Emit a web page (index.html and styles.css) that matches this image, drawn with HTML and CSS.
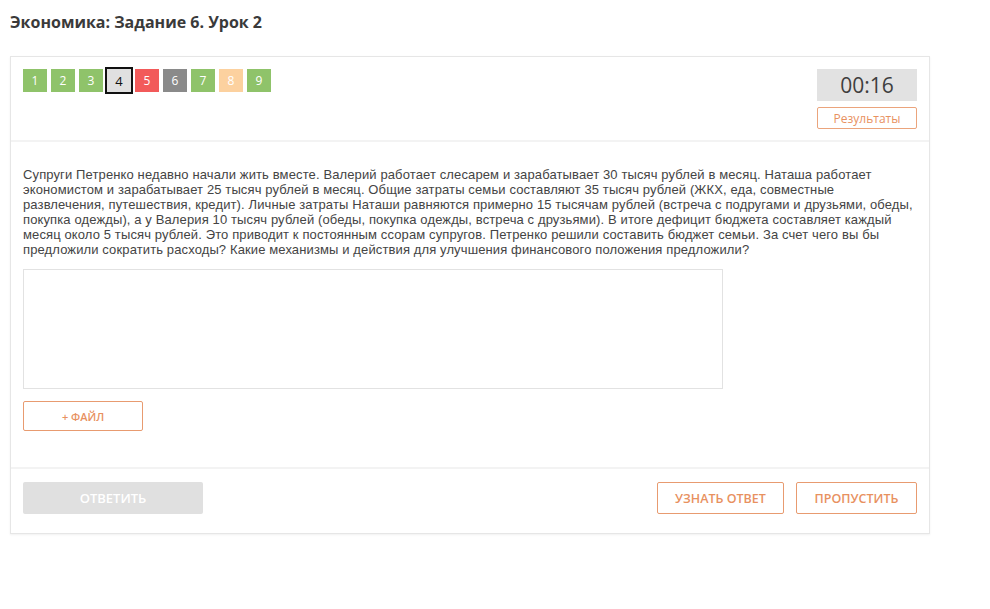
FILE: index.html
```html
<!DOCTYPE html>
<html lang="ru">
<head>
    <meta charset="UTF-8">
    <meta name="viewport" content="width=device-width, initial-scale=1.0">
    <title>Экономика: Задание 6. Урок 2</title>
    <link rel="stylesheet" href="styles.css">
</head>
<body>

<h1 class="page-title">Экономика: Задание 6. Урок 2</h1>

<div class="task-card">
    <div class="task-head">
        <div class="steps">
            <span class="step done">1</span>
            <span class="step done">2</span>
            <span class="step done">3</span>
            <span class="step current">4</span>
            <span class="step wrong">5</span>
            <span class="step skipped">6</span>
            <span class="step done">7</span>
            <span class="step partial">8</span>
            <span class="step done">9</span>
        </div>
        <div class="timer-box">
            <div class="timer">00:16</div>
            <button class="results-btn">Результаты</button>
        </div>
    </div>

    <div class="task-body">
        <p class="question">Супруги Петренко недавно начали жить вместе. Валерий работает слесарем и зарабатывает 30 тысяч рублей в месяц. Наташа работает экономистом и зарабатывает 25 тысяч рублей в месяц. Общие затраты семьи составляют 35 тысяч рублей (ЖКХ, еда, совместные развлечения, путешествия, кредит). Личные затраты Наташи равняются примерно 15 тысячам рублей (встреча с подругами и друзьями, обеды, покупка одежды), а у Валерия 10 тысяч рублей (обеды, покупка одежды, встреча с друзьями). В итоге дефицит бюджета составляет каждый месяц около 5 тысяч рублей. Это приводит к постоянным ссорам супругов. Петренко решили составить бюджет семьи. За счет чего вы бы предложили сократить расходы? Какие механизмы и действия для улучшения финансового положения предложили?</p>
        <textarea class="answer"></textarea>
        <button class="file-btn">+ ФАЙЛ</button>
    </div>

    <div class="task-foot">
        <button class="answer-btn" disabled>ОТВЕТИТЬ</button>
        <div class="foot-right">
            <button class="outline-btn reveal">УЗНАТЬ ОТВЕТ</button>
            <button class="outline-btn skip">ПРОПУСТИТЬ</button>
        </div>
    </div>
</div>

</body>
</html>
```

FILE: styles.css
```css
body {
    font-family: "Open Sans", Arial, sans-serif;
    background: #fff;
    margin: 0;
    padding: 10px;
    color: #333;
}
.page-title {
    margin: 1px 0 23px;
    font-size: 16px;
    font-weight: bold;
    color: #3a3a3a;
    line-height: 22px;
}
.task-card {
    width: 918px;
    border: 1px solid #e6e6e6;
    box-shadow: 0 1px 2px rgba(0, 0, 0, 0.06);
    background: #fff;
}
.task-head {
    display: flex;
    justify-content: space-between;
    align-items: flex-start;
    padding: 12px 12px 11px 12px;
    border-bottom: 2px solid #f3f3f3;
}
.steps {
    display: flex;
    gap: 4px;
}
.step {
    width: 24px;
    height: 23px;
    display: flex;
    align-items: center;
    justify-content: center;
    font-size: 12px;
    color: #fff;
}
.step.done {
    background: #8fc36a;
}
.step.wrong {
    background: #f25a5a;
}
.step.skipped {
    background: #8a8a8a;
}
.step.partial {
    background: #fcd19f;
}
.step.current {
    background: #e0e0e0;
    outline: 2px solid #111;
    color: #111;
    font-size: 13px;
}
.timer-box {
    display: flex;
    flex-direction: column;
    gap: 6px;
    width: 100px;
}
.timer {
    height: 32px;
    line-height: 32px;
    text-align: center;
    background: #e2e2e2;
    font-size: 21px;
    font-weight: 500;
    color: #3e3e3e;
}
.results-btn {
    height: 22px;
    padding: 0;
    background: #fff;
    border: 1px solid #eba47c;
    border-radius: 2px;
    color: #e8915f;
    font-family: "Open Sans", Arial, sans-serif;
    font-size: 12px;
}
.task-body {
    padding: 25px 12px 36px;
    border-bottom: 2px solid #f3f3f3;
}
.question {
    margin: 0 0 12px;
    font-family: Arial, "Liberation Sans", sans-serif;
    font-size: 13px;
    line-height: 15px;
    letter-spacing: 0.12px;
    color: #444;
}
.answer {
    display: block;
    width: 700px;
    height: 120px;
    box-sizing: border-box;
    border: 1px solid #e2e2e2;
    resize: none;
    margin-bottom: 12px;
}
.file-btn {
    width: 120px;
    height: 30px;
    background: #fff;
    border: 1px solid #e89b70;
    border-radius: 2px;
    color: #e8915f;
    font-family: "Open Sans", Arial, sans-serif;
    font-size: 11px;
    font-weight: 600;
}
.task-foot {
    display: flex;
    justify-content: space-between;
    padding: 13px 12px 19px;
}
.answer-btn {
    width: 180px;
    height: 32px;
    background: #e0e0e0;
    border: none;
    border-radius: 2px;
    color: #fff;
    font-family: "Open Sans", Arial, sans-serif;
    font-size: 13px;
    font-weight: 600;
}
.foot-right {
    display: flex;
    gap: 12px;
}
.outline-btn {
    height: 32px;
    padding: 0;
    background: #fff;
    border: 1px solid #e89b70;
    border-radius: 2px;
    color: #e8915f;
    font-family: "Open Sans", Arial, sans-serif;
    font-size: 12.5px;
    font-weight: 600;
}
.outline-btn.reveal {
    width: 127px;
}
.outline-btn.skip {
    width: 121px;
}
```
